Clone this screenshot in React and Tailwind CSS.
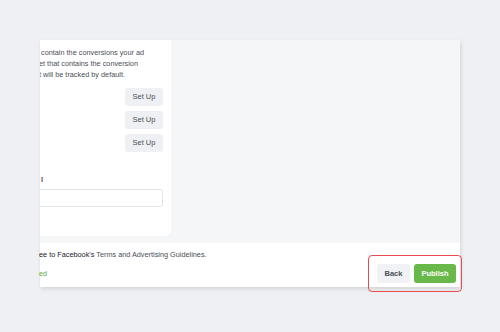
import React from 'react';

const font = { fontFamily: '"Liberation Sans", Arial, sans-serif' };

function SetUpButton() {
  return (
    <button className="w-[38px] h-[18px] rounded-[3px] bg-[#eef0f4] text-[7.5px] text-[#4b4f56] leading-none">
      Set Up
    </button>
  );
}

export default function App() {
  return (
    <div
      className="w-[500px] h-[332px] bg-[#eef0f3] pt-[40px] pl-[40px] overflow-hidden"
      style={font}
    >
      <div className="w-[420px] flex flex-col shadow-[1px_2px_4px_rgba(0,0,0,0.12)]">
        {/* Body */}
        <div className="h-[203px] flex bg-[#f5f6f8]">
          <div className="w-[131px] h-[196px] bg-white rounded-br-[6px] flex flex-col overflow-hidden">
            <div className="pt-[7px] text-[7.3px] leading-[11px] text-[#4b4f56] whitespace-nowrap">
              <div className="ml-[1px]">contain the conversions your ad</div>
              <div className="-ml-[1px]">et that contains the conversion</div>
              <div className="-ml-[1px]">t will be tracked by default.</div>
            </div>
            <div className="mt-[8px] pr-[8px] flex flex-col items-end gap-[5px]">
              <SetUpButton />
              <SetUpButton />
              <SetUpButton />
            </div>
            <div className="mt-[23px] ml-[1px] text-[7.5px] leading-[10px] font-bold text-[#4b4f56]">l</div>
            <div className="mt-[4px] mr-[8px] -ml-[4px] h-[18px] rounded-[3px] border border-[#e1e3e7] bg-white"></div>
          </div>
        </div>

        {/* Footer */}
        <div className="h-[44px] bg-white flex justify-between pr-[4px]">
          <div className="pt-[2px] text-[7.3px] leading-[19px] whitespace-nowrap">
            <div className="-ml-[1px]">
              <span className="text-[#1d2129]">ee to Facebook's </span>
              <span className="text-[#4b4f56]">Terms and Advertising Guidelines.</span>
            </div>
            <div className="-ml-[1px] text-[#5fa83e]">ed</div>
          </div>
          <div className="relative self-end mb-[4px] flex gap-[4px]">
            <div className="absolute -left-[9px] -top-[9px] -right-[6px] -bottom-[9px] border-[1.5px] border-[#ea4b4f] rounded-[4px]"></div>
            <button className="w-[33px] h-[19px] rounded-[3px] bg-[#f1f2f5] text-[7.5px] font-bold text-[#4b4f56] leading-none">
              Back
            </button>
            <button className="w-[42px] h-[19px] rounded-[3px] bg-[#69b84a] text-[7.5px] font-bold text-white leading-none">
              Publish
            </button>
          </div>
        </div>
      </div>
    </div>
  );
}
